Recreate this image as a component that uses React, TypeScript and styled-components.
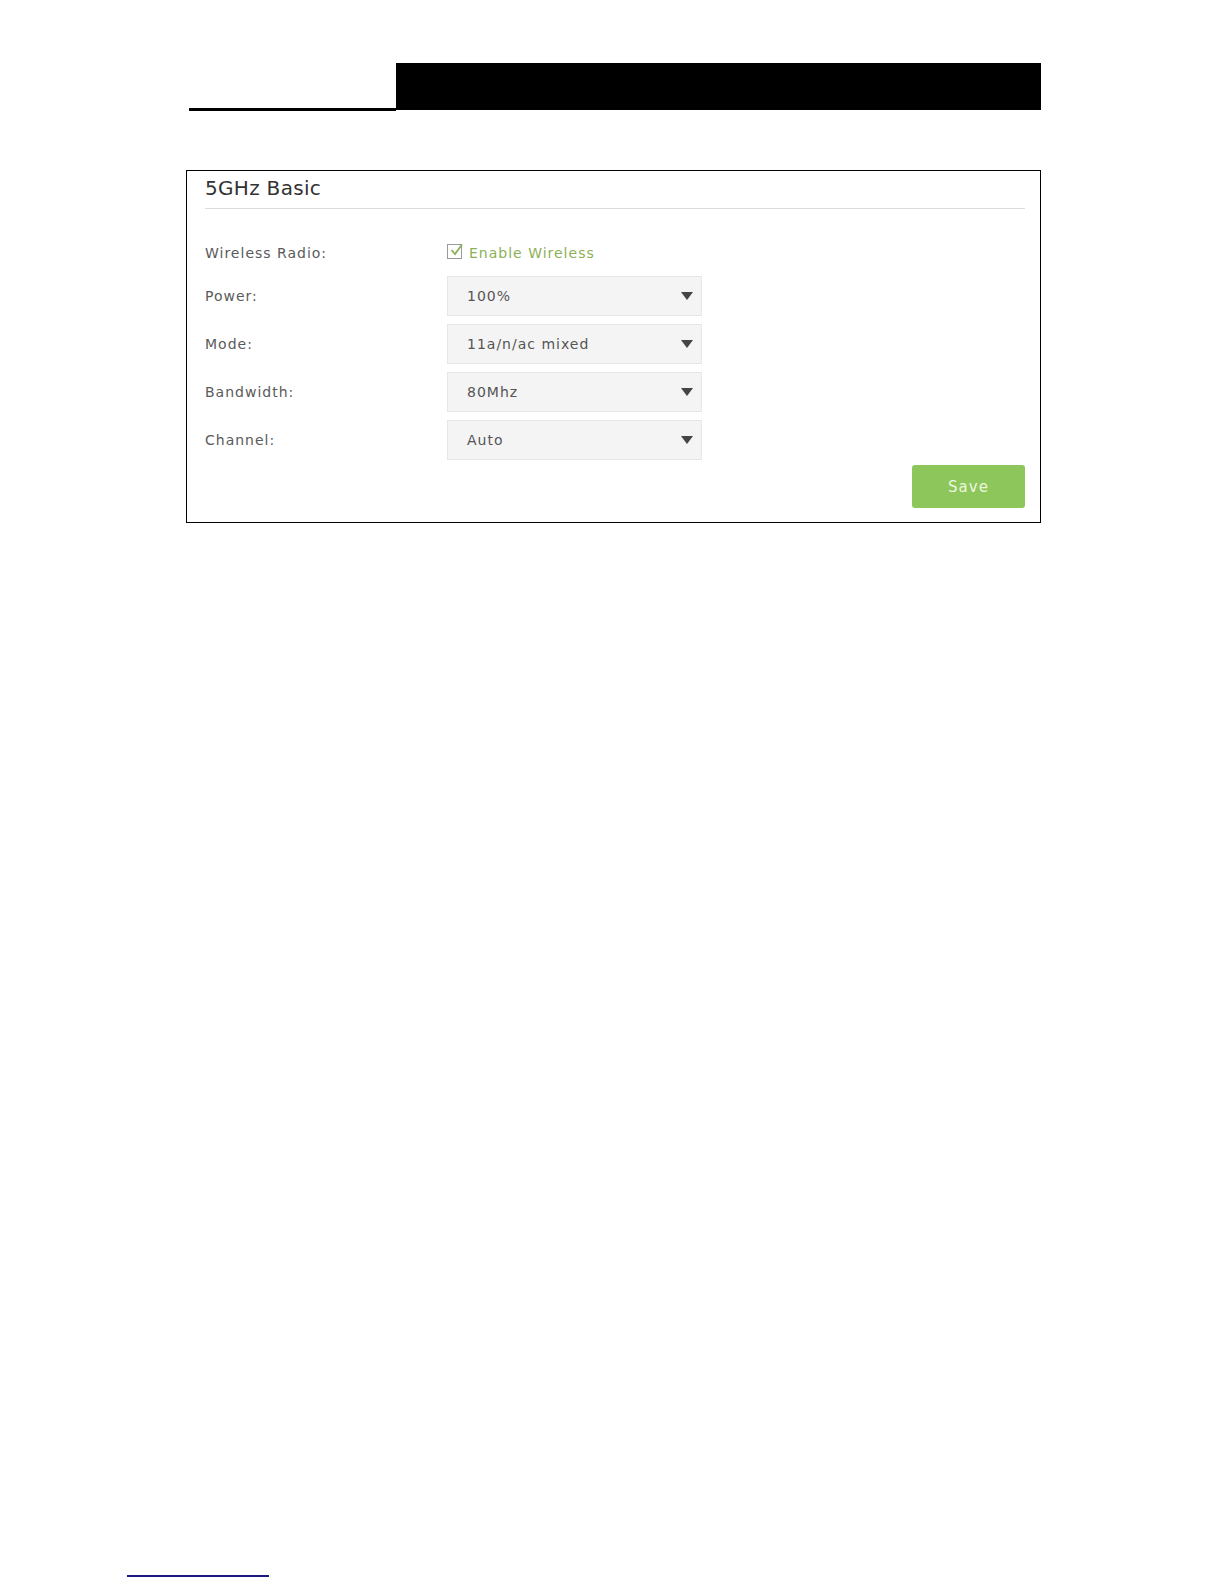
import React, { useState } from 'react';
import styled, { createGlobalStyle } from 'styled-components';

const GlobalStyle = createGlobalStyle`
  html, body {
    margin: 0;
    padding: 0;
    background: #fff;
  }
  body {
    font-family: "DejaVu Sans", Verdana, sans-serif;
  }
`;

const Page = styled.div`
  width: 1224px;
  min-height: 1584px;
  display: flex;
  flex-direction: column;
  padding-top: 63px;
  padding-bottom: 7px;
  box-sizing: border-box;
`;

const Header = styled.div`
  display: flex;
  align-items: flex-end;
  margin-left: 189px;
  width: 852px;
`;

const HeaderRule = styled.div`
  width: 207px;
  height: 3px;
  margin-bottom: -1px;
  background: #000;
`;

const HeaderBlock = styled.div`
  flex: 1;
  height: 47px;
  background: #000;
`;

const Panel = styled.section`
  margin: 60px 0 0 186px;
  width: 855px;
  box-sizing: border-box;
  border: 1px solid #000;
  padding: 0 15px 14px 18px;
`;

const PanelTitle = styled.h2`
  margin: 0;
  padding-top: 2px;
  height: 38px;
  line-height: 30px;
  box-sizing: border-box;
  border-bottom: 1px solid #dcdcdc;
  font-size: 20px;
  font-weight: normal;
  letter-spacing: 0.3px;
  color: #333;
`;

const Form = styled.div`
  margin-top: 28px;
  display: grid;
  grid-template-columns: 242px 255px;
  grid-auto-rows: 40px;
  grid-template-rows: 31px;
  row-gap: 8px;
  align-items: center;
`;

const Label = styled.div`
  font-size: 14px;
  letter-spacing: 1px;
  color: #5a5a5a;
`;

const CheckRow = styled.label`
  display: flex;
  align-items: center;
  gap: 7px;
  font-size: 14px;
  letter-spacing: 1px;
  color: #8bb156;
  cursor: pointer;
`;

const CheckBox = styled.span`
  width: 15px;
  height: 15px;
  border: 1px solid #9a9a9a;
  box-sizing: border-box;
  position: relative;
  display: inline-block;
  margin-top: -2px;
`;

const CheckMark = styled.svg`
  position: absolute;
  left: 1px;
  top: -2px;
`;

const SelectBox = styled.div`
  height: 40px;
  box-sizing: border-box;
  background: #f4f4f4;
  border: 1px solid #e6e6e6;
  display: flex;
  align-items: center;
  justify-content: space-between;
  padding: 0 8px 0 19px;
  font-size: 14px;
  letter-spacing: 1px;
  color: #555;
  cursor: pointer;
`;

const Arrow = styled.span`
  width: 0;
  height: 0;
  border-left: 6.5px solid transparent;
  border-right: 6.5px solid transparent;
  border-top: 8px solid #444;
`;

const Actions = styled.div`
  display: flex;
  justify-content: flex-end;
  margin-top: 5px;
`;

const SaveButton = styled.button`
  width: 113px;
  height: 43px;
  border: none;
  border-radius: 3px;
  background: #8dc65a;
  color: #ecf7df;
  font-family: "DejaVu Sans", Verdana, sans-serif;
  font-size: 15px;
  letter-spacing: 1px;
  cursor: pointer;
`;

const Footer = styled.div`
  margin-top: auto;
  margin-left: 127px;
  width: 142px;
  height: 2px;
  background: #1a1a80;
`;

const fields = [
  { label: 'Power:', value: '100%' },
  { label: 'Mode:', value: '11a/n/ac mixed' },
  { label: 'Bandwidth:', value: '80Mhz' },
  { label: 'Channel:', value: 'Auto' },
];

const App = () => {
  const [enabled, setEnabled] = useState(true);

  return (
    <Page>
      <GlobalStyle />
      <Header>
        <HeaderRule />
        <HeaderBlock />
      </Header>
      <Panel>
        <PanelTitle>5GHz Basic</PanelTitle>
        <Form>
          <Label>Wireless Radio:</Label>
          <CheckRow onClick={() => setEnabled(!enabled)}>
            <CheckBox>
              {enabled && (
                <CheckMark width="14" height="14" viewBox="0 0 14 14">
                  <path d="M2.5 7 L6 11 L13 1.5" fill="none" stroke="#8bb156" strokeWidth="1.8" />
                </CheckMark>
              )}
            </CheckBox>
            Enable Wireless
          </CheckRow>
          {fields.map(f => (
            <React.Fragment key={f.label}>
              <Label>{f.label}</Label>
              <SelectBox>
                {f.value}
                <Arrow />
              </SelectBox>
            </React.Fragment>
          ))}
        </Form>
        <Actions>
          <SaveButton>Save</SaveButton>
        </Actions>
      </Panel>
      <Footer />
    </Page>
  );
};

export default App;
